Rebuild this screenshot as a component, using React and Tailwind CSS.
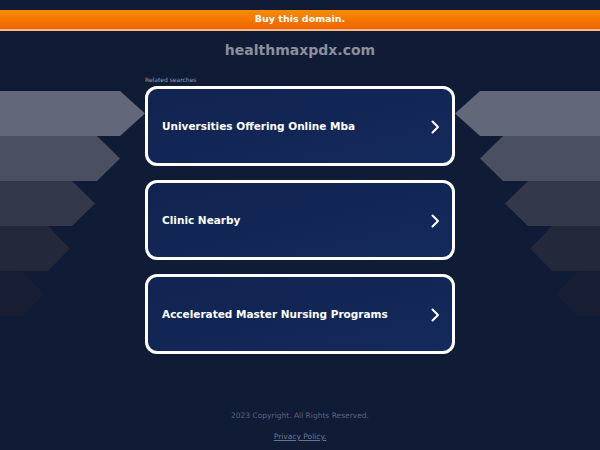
import React from 'react';

const searches = [
    'Universities Offering Online Mba',
    'Clinic Nearby',
    'Accelerated Master Nursing Programs',
];

// decorative stacked arrows, left side points right, right side mirrored
const arrows = [
    { y: 91, body: 120, tip: 145, color: '#62677a' },
    { y: 136, body: 97, tip: 120, color: '#4a4f62' },
    { y: 181, body: 72, tip: 95, color: '#33384b' },
    { y: 226, body: 48, tip: 70, color: '#23283b' },
    { y: 271, body: 22, tip: 44, color: '#171e34' },
];

function Arrows() {
    return (
        <svg className="absolute inset-0 pointer-events-none" width="600" height="450" viewBox="0 0 600 450">
            {arrows.map((a, i) => (
                <g key={i}>
                    <polygon
                        points={`0,${a.y} ${a.body},${a.y} ${a.tip},${a.y + 22.5} ${a.body},${a.y + 45} 0,${a.y + 45}`}
                        fill={a.color}
                    />
                    <polygon
                        points={`600,${a.y} ${600 - a.body},${a.y} ${600 - a.tip},${a.y + 22.5} ${600 - a.body},${a.y + 45} 600,${a.y + 45}`}
                        fill={a.color}
                    />
                </g>
            ))}
        </svg>
    );
}

function Chevron() {
    return (
        <svg width="10" height="14" viewBox="0 0 10 14" fill="none">
            <path d="M2.5 1.5 L8 7 L2.5 12.5" stroke="white" strokeWidth="2" strokeLinecap="round" strokeLinejoin="round" />
        </svg>
    );
}

export default function App() {
    return (
        <div className="relative w-[600px] h-[450px] overflow-hidden bg-[#101b36]" style={{ fontFamily: '"DejaVu Sans", Verdana, sans-serif' }}>
            <Arrows />
            <div className="relative flex flex-col items-center">
                <div className="mt-[10px] w-full h-[21px] flex items-center justify-center bg-gradient-to-b from-[#f68c02] to-[#ef6200] border-b-2 border-[#f5b98a]">
                    <span className="text-white font-bold text-[9.5px]">Buy this domain.</span>
                </div>
                <h1 className="mt-[9px] text-[14px] leading-[20px] font-bold text-[#8b909c]">healthmaxpdx.com</h1>

                <div className="mt-[16px] w-[310px]">
                    <p className="text-[6px] leading-[8px] text-[#9aa0ae]">Related searches</p>
                    <div className="mt-[2px] flex flex-col gap-[14px]">
                        {searches.map((s) => (
                            <div
                                key={s}
                                className="h-[80px] rounded-[12px] border-[3px] border-white bg-gradient-to-br from-[#112350] to-[#142a5c] flex items-center justify-between pl-[14px] pr-[12px] pt-[2px]"
                            >
                                <span className="text-white font-bold text-[10.5px]">{s}</span>
                                <Chevron />
                            </div>
                        ))}
                    </div>
                </div>

                <p className="mt-[57px] text-[7.5px] leading-[10px] text-[#5b6483]">2023 Copyright. All Rights Reserved.</p>
                <p className="mt-[11px] text-[7.5px] leading-[10px] text-[#6b738f] underline">Privacy Policy.</p>
            </div>
        </div>
    );
}
